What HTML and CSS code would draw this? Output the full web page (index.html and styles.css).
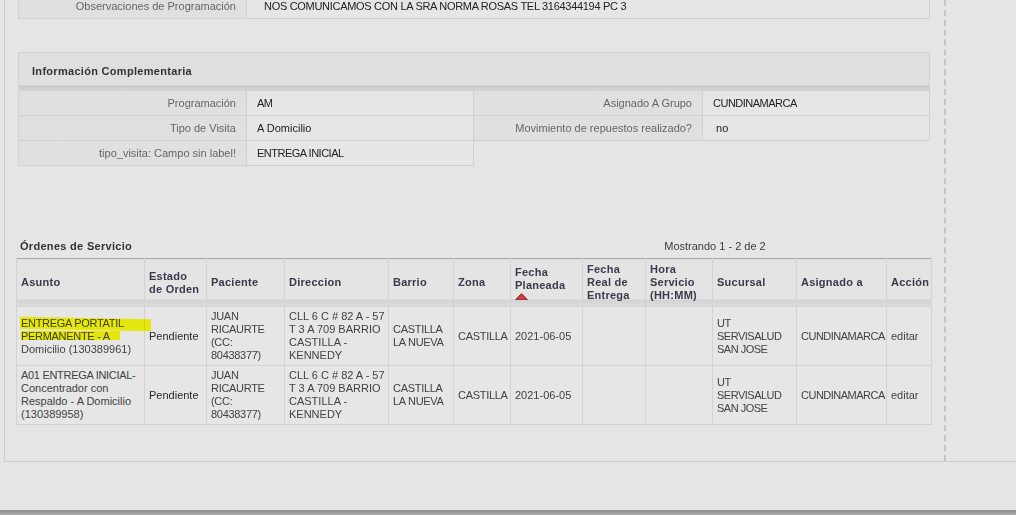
FILE: index.html
```html
<!DOCTYPE html>
<html lang="es">
<head>
  <meta charset="UTF-8" />
  <meta name="viewport" content="width=device-width, initial-scale=1.0"/>
  <title>Orden de Servicio</title>
  <link rel="stylesheet" href="styles.css">
</head>
<body>
  <div class="page">
    <div class="main">
      <table class="detail top-detail">
        <tr>
          <td class="label">Observaciones de Programación</td>
          <td class="value caps-soft">NOS COMUNICAMOS CON LA SRA NORMA ROSAS TEL 3164344194 PC 3</td>
        </tr>
      </table>

      <div class="panel">
        <div class="panel-title">Información Complementaria</div>
        <table class="detail info">
          <tr>
            <td class="label">Programación</td>
            <td class="value caps">AM</td>
            <td class="label">Asignado A Grupo</td>
            <td class="value caps">CUNDINAMARCA</td>
          </tr>
          <tr>
            <td class="label">Tipo de Visita</td>
            <td class="value">A Domicilio</td>
            <td class="label">Movimiento de repuestos realizado?</td>
            <td class="value">&nbsp;no</td>
          </tr>
          <tr>
            <td class="label">tipo_visita: Campo sin label!</td>
            <td class="value caps">ENTREGA INICIAL</td>
            <td class="empty" colspan="2"></td>
          </tr>
        </table>
      </div>

      <div class="orders">
        <div class="orders-head">
          <span class="orders-title">Órdenes de Servicio</span>
          <span class="paging">Mostrando 1 - 2 de 2</span>
        </div>
        <table class="list">
          <colgroup>
            <col style="width:128px"><col style="width:62px"><col style="width:78px"><col style="width:104px">
            <col style="width:65px"><col style="width:57px"><col style="width:72px"><col style="width:63px">
            <col style="width:67px"><col style="width:84px"><col style="width:90px"><col style="width:45px">
          </colgroup>
          <thead>
            <tr>
              <th>Asunto</th>
              <th>Estado<br>de Orden</th>
              <th>Paciente</th>
              <th>Direccion</th>
              <th>Barrio</th>
              <th>Zona</th>
              <th>Fecha<br>Planeada
                <svg class="sort-icon" width="13" height="7" viewBox="0 0 13 7"><path d="M6.5 0.5 L12.5 6.5 L0.5 6.5 Z" fill="#d33a3a" stroke="#7a2a2a" stroke-width="0.8"/></svg>
              </th>
              <th>Fecha<br>Real de<br>Entrega</th>
              <th>Hora<br>Servicio<br>(HH:MM)</th>
              <th>Sucursal</th>
              <th>Asignado a</th>
              <th>Acción</th>
            </tr>
          </thead>
          <tbody>
            <tr>
              <td class="subject">
                <span class="caps-soft">ENTREGA PORTATIL<br>PERMANENTE - A</span><br>Domicilio (130389961)
                <span class="marker marker-one"></span>
                <span class="marker marker-two"></span>
              </td>
              <td class="strong">Pendiente</td>
              <td class="caps-soft">JUAN<br>RICAURTE<br>(CC:<br>80438377)</td>
              <td>CLL 6 C # 82 A - 57<br>T 3 A 709 BARRIO<br>CASTILLA -<br>KENNEDY</td>
              <td class="caps-soft">CASTILLA<br>LA NUEVA</td>
              <td class="caps-soft">CASTILLA</td>
              <td>2021-06-05</td>
              <td></td>
              <td></td>
              <td class="caps">UT<br>SERVISALUD<br>SAN JOSE</td>
              <td class="caps">CUNDINAMARCA</td>
              <td>editar</td>
            </tr>
            <tr>
              <td class="subject"><span class="caps-soft">A01 ENTREGA INICIAL-</span><br>Concentrador con<br>Respaldo - A Domicilio<br>(130389958)</td>
              <td class="strong">Pendiente</td>
              <td class="caps-soft">JUAN<br>RICAURTE<br>(CC:<br>80438377)</td>
              <td>CLL 6 C # 82 A - 57<br>T 3 A 709 BARRIO<br>CASTILLA -<br>KENNEDY</td>
              <td class="caps-soft">CASTILLA<br>LA NUEVA</td>
              <td class="caps-soft">CASTILLA</td>
              <td>2021-06-05</td>
              <td></td>
              <td></td>
              <td class="caps">UT<br>SERVISALUD<br>SAN JOSE</td>
              <td class="caps">CUNDINAMARCA</td>
              <td>editar</td>
            </tr>
          </tbody>
        </table>
      </div>
    </div>
    <div class="side"></div>
  </div>
  <div class="window-edge"></div>
</body>
</html>
```

FILE: styles.css
```css
body {
  margin: 0;
  background: #e5e5e5;
  font-family: "Liberation Sans", Arial, sans-serif;
  font-size: 11px;
  color: #333;
  overflow: hidden;
}
.caps {
  letter-spacing: -0.5px;
}
.caps-soft {
  letter-spacing: -0.3px;
}
.page {
  display: flex;
  height: 461px;
  margin-left: 4px;
  border-left: 1px solid #cdcdcd;
  border-bottom: 1px solid #cdcdcd;
}
.main {
  width: 926px;
  padding-left: 13px;
  flex: none;
}
.side {
  flex: 1;
  border-left: 2px dashed #c4c4c4;
}

/* detail tables */
.detail {
  border-collapse: collapse;
  table-layout: fixed;
  width: 912px;
}
.detail td {
  height: 24px;
  padding: 0;
  border: 1px solid #d1d1d1;
  line-height: 13px;
  vertical-align: middle;
}
.detail .label {
  text-align: right;
  padding-right: 10px;
  color: #666;
  background: repeating-linear-gradient(135deg, #e1e1e1 0, #e1e1e1 2px, #dedede 2px, #dedede 3px);
}
.detail .value {
  padding-left: 10px;
  color: #222;
  background: #e6e6e6;
}
.detail .empty {
  border: none;
  background: transparent;
  border-top: 1px solid #d1d1d1;
}
.top-detail {
  margin-top: -7px;
}
.top-detail .label {
  width: 217px;
}
.top-detail .value {
  padding-left: 17px;
}
.info td:nth-child(1) { width: 217px; }
.info td:nth-child(2) { width: 216px; }
.info td:nth-child(3) { width: 218px; }

.panel {
  margin-top: 33px;
  width: 912px;
}
.panel-title {
  height: 37px;
  line-height: 37px;
  padding-left: 13px;
  font-weight: bold;
  letter-spacing: 0.3px;
  color: #333;
  border: 1px solid #d1d1d1;
  border-bottom: none;
  background: linear-gradient(to bottom, #dfdfdf 0, #dfdfdf 32px, #c8c8c8 33px, #d6d6d6 37px);
}

/* orders */
.orders {
  margin-top: 74px;
  margin-left: -2px;
  width: 915px;
}
.orders-head {
  display: flex;
  height: 13px;
  line-height: 13px;
  margin-bottom: 5px;
}
.orders-title {
  width: 479px;
  padding-left: 4px;
  font-weight: bold;
  letter-spacing: 0.3px;
  color: #333;
}
.paging {
  flex: 1;
  text-align: center;
  color: #3a3a48;
}
.list {
  border-collapse: collapse;
  table-layout: fixed;
  width: 915px;
  border-top: 1px solid #a9a9a9;
}
.list th {
  padding: 4px;
  text-align: left;
  font-weight: bold;
  letter-spacing: 0.25px;
  line-height: 13px;
  color: #3a3a4c;
  border-left: 1px solid #f2f2f2;
  border-right: 1px solid #d3d3d3;
  background: linear-gradient(to top, #dcdcdc 0, #d2d2d2 7px, #e4e4e4 7px);
  vertical-align: middle;
  white-space: nowrap;
}
.list th:first-child {
  border-left: 1px solid #d3d3d3;
}
.sort-icon {
  display: block;
  margin-top: 1px;
}
.list td {
  padding: 3px 2px 3px 4px;
  line-height: 13px;
  color: #424242;
  border: 1px solid #d3d3d3;
  vertical-align: middle;
  background: #e6e6e6;
  white-space: nowrap;
}
.list td.strong {
  color: #2a2a2a;
}
.subject {
  position: relative;
}

/* yellow highlighter strokes drawn over the first row */
.marker {
  position: absolute;
  background: #ffff10;
  mix-blend-mode: multiply;
}
.marker-one {
  left: 3px;
  top: 11px;
  width: 131px;
  height: 12px;
  transform: skewY(1deg);
}
.marker-two {
  left: 4px;
  top: 24px;
  width: 99px;
  height: 9px;
}

.window-edge {
  margin-top: 48px;
  height: 5px;
  background: linear-gradient(to bottom, #8a8a8a, #b0b0b0);
}
```
